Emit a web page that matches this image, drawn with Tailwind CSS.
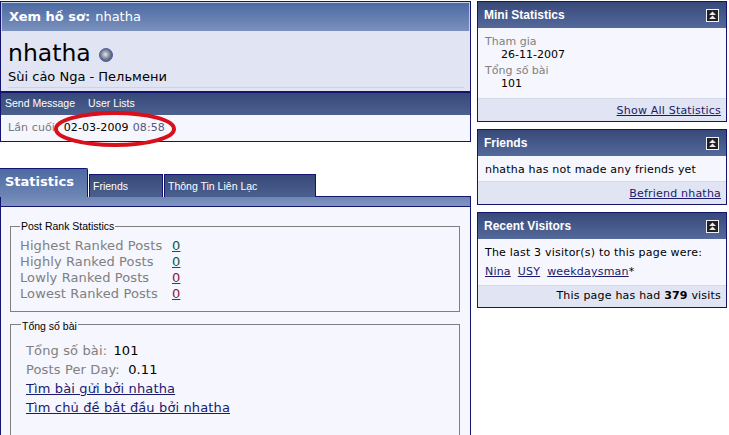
<!DOCTYPE html>
<html lang="en">
<head>
    <meta charset="UTF-8">
    <title>Xem hồ sơ: nhatha</title>
    <script src="https://cdn.jsdelivr.net/npm/@tailwindcss/browser@4"></script>
</head>
<body class="bg-white">
    <div class="relative flex w-[729px] h-[435px] overflow-hidden font-['DejaVu_Sans',sans-serif] text-[11px] text-black">

        <!-- left column -->
        <div class="w-[471px] shrink-0 pt-px">
            <div class="border border-[#14146e] border-b-0">
                <div class="h-[29px] px-[7px] flex items-center border border-white/60 border-b-0 bg-gradient-to-b from-[#4c6aa3] to-[#7b91bd] text-white text-[13px]">
                    <span class="font-bold">Xem hồ sơ:</span><span class="ml-[5px]">nhatha</span>
                </div>
                <div class="h-[60px] bg-[#e1e4f2] pl-[7px] pt-[7px]">
                    <div class="flex items-center h-[30px]">
                        <span class="text-[23.5px] leading-[30px]">nhatha</span>
                        <span class="ml-[8px] mt-[4px] w-[14px] h-[14px] rounded-full border border-[#4a5aa8] bg-[radial-gradient(circle_at_45%_45%,#dfe2e8,#6c7488_55%,#33407f)]"></span>
                    </div>
                    <div class="text-[13px] leading-[16px] mt-[1px] border-b border-[#cfd2e2] pb-[2px] mr-[6px]">Sùi cảo Nga - Пельмени</div>
                </div>
            </div>
            <div class="border-2 border-x-0 border-[#14146e] border-r border-l border-b h-[51px] flex flex-col">
                <div class="h-[22px] px-[4px] flex items-center gap-[13px] bg-gradient-to-b from-[#374979] to-[#4c6090] text-white text-[10.5px] font-['Liberation_Sans',sans-serif]">
                    <span>Send Message</span><span>User Lists</span>
                </div>
                <div class="flex-1 bg-[#f5f6fe] px-[7px] flex items-center text-[11px] tracking-[0.1px]">
                    <span class="text-[#777777]">Lần cuối:</span>
                    <span class="ml-[5px]">02-03-2009</span>
                    <span class="ml-[4px] text-[#555577]">08:58</span>
                </div>
            </div>

            <!-- tabs -->
            <div class="mt-[26px] flex items-end h-[29px]">
                <div class="w-[88px] h-[29px] rounded-tr-[2px] border-t border-r border-[#14146e] bg-gradient-to-b from-[#4c6aa3] to-[#6e86b4] text-white font-bold text-[13px] pl-[5px] pt-[3px]">Statistics</div>
                <div class="ml-px w-[74px] h-[23px] border border-b-0 border-[#14146e] bg-gradient-to-b from-[#374979] to-[#4c6090] text-white text-[10.5px] font-['Liberation_Sans',sans-serif] pl-[3px] pt-[4px]">Friends</div>
                <div class="ml-px w-[152px] h-[23px] border border-b-0 border-[#14146e] bg-gradient-to-b from-[#374979] to-[#4c6090] text-white text-[10.5px] font-['Liberation_Sans',sans-serif] pl-[3px] pt-[4px]">Thông Tin Liên Lạc</div>
                <div class="flex-1 border-b border-[#14146e]"></div>
            </div>
            <div class="h-[10px] border-x border-[#14146e] border-b bg-gradient-to-b from-[#6e86b4] to-[#8096c0]"></div>
            <div class="border-x border-[#14146e] bg-[#f5f6fe] h-[240px] pl-[9px] pr-[9px] pt-[13px]">
                <fieldset class="border border-[#808080] h-[92px] mr-px px-[9px]">
                    <legend class="px-px text-[10.5px] leading-[13px] font-['Liberation_Sans',sans-serif]">Post Rank Statistics</legend>
                    <div class="grid grid-cols-[152px_auto] justify-start text-[13px] leading-[16px] mt-[5px] tracking-[0.1px]">
                        <span class="text-[#808080]">Highest Ranked Posts</span><a class="underline text-[#0b5a3a]">0</a>
                        <span class="text-[#808080]">Highly Ranked Posts</span><a class="underline text-[#0b5a3a]">0</a>
                        <span class="text-[#808080]">Lowly Ranked Posts</span><a class="underline text-[#8b1a2a]">0</a>
                        <span class="text-[#808080]">Lowest Ranked Posts</span><a class="underline text-[#8b1a2a]">0</a>
                    </div>
                </fieldset>
                <fieldset class="mt-[6px] border border-[#808080] h-[118px] mr-px pl-[15px] pr-[9px]">
                    <legend class="ml-[-5px] px-px text-[10.5px] leading-[13px] font-['Liberation_Sans',sans-serif] translate-y-[2px]">Tổng số bài</legend>
                    <div class="text-[13px] leading-[19px] mt-[10px] tracking-[0.13px]">
                        <div><span class="text-[#808080]">Tổng số bài:</span> <span class="ml-[2px]">101</span></div>
                        <div><span class="text-[#808080]">Posts Per Day:</span> <span class="ml-[4px]">0.11</span></div>
                        <div><a class="underline text-[#1a1a6e]">Tìm bài gửi bởi nhatha</a></div>
                        <div><a class="underline text-[#1a1a6e]">Tìm chủ đề bắt đầu bởi nhatha</a></div>
                    </div>
                </fieldset>
            </div>
        </div>

        <!-- right column -->
        <div class="w-[250px] ml-[6px] shrink-0 pt-px flex flex-col gap-[7px] tracking-[0.2px]">
            <div class="border border-[#14146e] h-[121px] flex flex-col">
                <div class="h-[26px] px-[6px] flex items-center justify-between bg-gradient-to-b from-[#374979] to-[#546a9b] text-white font-bold text-[12px] font-['Liberation_Sans',sans-serif] tracking-normal">
                    <span>Mini Statistics</span>
                    <svg class="mr-px" width="13" height="13" viewBox="0 0 13 13"><rect x="0.5" y="0.5" width="12" height="12" fill="#222222" stroke="#f0f0f8"/><path d="M6.5 2.5L10 6H3Z M6.5 6.5L10 10H3Z" fill="#e8eaf0"/></svg>
                </div>
                <div class="flex-1 bg-[#f5f6fe] px-[7px] pt-[7px] text-[11px] leading-[13px] tracking-normal">
                    <div class="text-[#808080]">Tham gia</div>
                    <div class="pl-4">26-11-2007</div>
                    <div class="text-[#808080] mt-[3px]">Tổng số bài</div>
                    <div class="pl-4">101</div>
                </div>
                <div class="h-[23px] bg-[#e1e4f2] border-t border-[#d5d8e8] px-[5px] pt-[2px] flex items-center justify-end">
                    <a class="underline text-[#1a1a6e]">Show All Statistics</a>
                </div>
            </div>
            <div class="border border-[#14146e] h-[76px] flex flex-col">
                <div class="h-[26px] px-[6px] flex items-center justify-between bg-gradient-to-b from-[#374979] to-[#546a9b] text-white font-bold text-[12px] font-['Liberation_Sans',sans-serif] tracking-normal">
                    <span>Friends</span>
                    <svg class="mr-px" width="13" height="13" viewBox="0 0 13 13"><rect x="0.5" y="0.5" width="12" height="12" fill="#222222" stroke="#f0f0f8"/><path d="M6.5 2.5L10 6H3Z M6.5 6.5L10 10H3Z" fill="#e8eaf0"/></svg>
                </div>
                <div class="flex-1 bg-[#f5f6fe] px-[7px] pt-[3px] flex items-center">nhatha has not made any friends yet</div>
                <div class="h-[23px] bg-[#e1e4f2] border-t border-[#d5d8e8] px-[5px] pt-[2px] flex items-center justify-end">
                    <a class="underline text-[#1a1a6e]">Befriend nhatha</a>
                </div>
            </div>
            <div class="border border-[#14146e] h-[96px] flex flex-col">
                <div class="h-[26px] px-[6px] flex items-center justify-between bg-gradient-to-b from-[#374979] to-[#546a9b] text-white font-bold text-[12px] font-['Liberation_Sans',sans-serif] tracking-normal">
                    <span>Recent Visitors</span>
                    <svg class="mr-px" width="13" height="13" viewBox="0 0 13 13"><rect x="0.5" y="0.5" width="12" height="12" fill="#222222" stroke="#f0f0f8"/><path d="M6.5 2.5L10 6H3Z M6.5 6.5L10 10H3Z" fill="#e8eaf0"/></svg>
                </div>
                <div class="flex-1 bg-[#f5f6fe] px-[7px] pt-[4px] leading-[19px]">
                    <div>The last 3 visitor(s) to this page were:</div>
                    <div><a class="underline text-[#1a1a6e]">Nina</a><a class="underline text-[#1a1a6e] ml-[7px]">USY</a><a class="underline text-[#1a1a6e] ml-[7px]">weekdaysman</a>*</div>
                </div>
                <div class="h-[22px] bg-[#e1e4f2] border-t border-[#d5d8e8] px-[5px] flex items-center justify-end">
                    <span>This page has had <b>379</b> visits</span>
                </div>
            </div>
        </div>

        <!-- red marker drawn over the screenshot -->
        <svg class="absolute left-0 top-0" width="729" height="435" viewBox="0 0 729 435" fill="none">
            <ellipse cx="115" cy="129" rx="59" ry="16" stroke="#d8101c" stroke-width="4"/>
        </svg>
    </div>
</body>
</html>
